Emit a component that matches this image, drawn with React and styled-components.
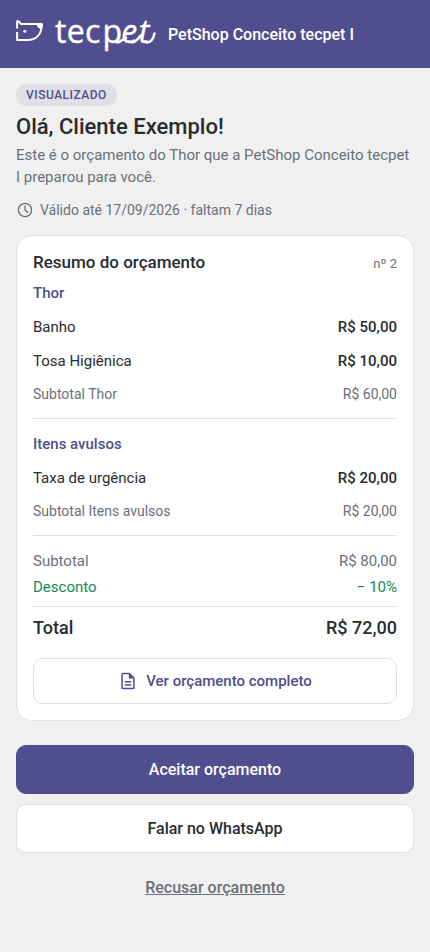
import React from "react";
import styled, { createGlobalStyle } from "styled-components";

const GlobalStyle = createGlobalStyle`
  * {
    box-sizing: border-box;
  }
  body {
    margin: 0;
    background: #f0f0f0;
    color: #292c2f;
    font-family: Roboto, "Liberation Sans", sans-serif;
    font-size: 15px;
  }
  button {
    font-family: inherit;
    cursor: pointer;
  }
`;

const groups = [
  {
    name: "Thor",
    items: [
      { label: "Banho", price: "R$ 50,00" },
      { label: "Tosa Higiênica", price: "R$ 10,00" },
    ],
    subtotal: "R$ 60,00",
  },
  {
    name: "Itens avulsos",
    items: [{ label: "Taxa de urgência", price: "R$ 20,00" }],
    subtotal: "R$ 20,00",
  },
];

const Logo = () => (
  <LogoBox>
    <svg width="28" height="24" viewBox="0 0 28 24" fill="none">
      <path
        d="M1.100 9.500V2.600Q1.300 1.400 2.300 2.300L5.200 5H25.800C25.800 15 20.500 21 11 21H1.100V13"
        stroke="#fff"
        strokeWidth="2"
        strokeLinejoin="round"
      />
      <path d="M20.500 5h6.200c0 2.200-.5 4-1.200 5.400-2.600-.4-4.600-2.600-5-5.400z" fill="#fff" />
      <circle cx="8.800" cy="12.300" r="1.500" fill="#fff" />
    </svg>
    <Wordmark>
      tec<Loose>p</Loose>
      <Slanted>et</Slanted>
      <Swash width="40" height="14" viewBox="0 0 40 14" fill="none">
        <path
          d="M1 12.500C5 12.500 7 8.500 10 7.500M16 12.500C20 12.500 22 9 24.500 5.500M31 12.500C35 12.500 37.500 8 38.500 3.500"
          stroke="#fff"
          strokeWidth="2.500"
          strokeLinecap="round"
        />
      </Swash>
    </Wordmark>
  </LogoBox>
);

const App = () => {
  return (
    <>
      <GlobalStyle />
      <Header>
        <Logo />
        <ShopName>PetShop Conceito tecpet I</ShopName>
      </Header>
      <Main>
        <Badge>VISUALIZADO</Badge>
        <Title>Olá, Cliente Exemplo!</Title>
        <Intro>
          Este é o orçamento do Thor que a PetShop Conceito tecpet I preparou
          para você.
        </Intro>
        <Validity>
          <svg
            width="18"
            height="18"
            viewBox="0 0 18 18"
            fill="none"
            stroke="#6b7078"
            strokeWidth="1.300"
            strokeLinecap="round"
            strokeLinejoin="round"
          >
            <circle cx="9" cy="9" r="6.600" />
            <path d="M9 4.800V9l2.600 2.300" />
          </svg>
          Válido até 17/09/2026 · faltam 7 dias
        </Validity>

        <Card>
          <CardHeader>
            <CardTitle>Resumo do orçamento</CardTitle>
            <QuoteNumber>nº 2</QuoteNumber>
          </CardHeader>
          {groups.map((group) => (
            <Group key={group.name}>
              <GroupName>{group.name}</GroupName>
              {group.items.map((item) => (
                <ItemRow key={item.label}>
                  <span>{item.label}</span>
                  <Price>{item.price}</Price>
                </ItemRow>
              ))}
              <SubtotalRow>
                <span>Subtotal {group.name}</span>
                <span>{group.subtotal}</span>
              </SubtotalRow>
            </Group>
          ))}
          <SummaryRow>
            <span>Subtotal</span>
            <span>R$ 80,00</span>
          </SummaryRow>
          <SummaryRow $discount>
            <span>Desconto</span>
            <span>− 10%</span>
          </SummaryRow>
          <TotalRow>
            <span>Total</span>
            <span>R$ 72,00</span>
          </TotalRow>
          <DetailsButton>
            <svg width="20" height="20" viewBox="0 0 24 24" fill="#504e8e">
              <path d="M8 16h8v1.800H8zm0-4h8v1.800H8zm6-10H6c-1.100 0-2 .9-2 2v16c0 1.100.890 2 1.990 2H18c1.100 0 2-.9 2-2V8l-6-6zm4.200 18.200H5.800V3.800H13v5.200h5.200z" />
            </svg>
            Ver orçamento completo
          </DetailsButton>
        </Card>

        <Actions>
          <ActionButton $primary>Aceitar orçamento</ActionButton>
          <ActionButton>Falar no WhatsApp</ActionButton>
        </Actions>
        <RefuseButton>Recusar orçamento</RefuseButton>
      </Main>
    </>
  );
};

const Header = styled.header`
  display: flex;
  align-items: center;
  gap: 12px;
  height: 68px;
  padding: 0 16px;
  background: #504e8e;
  color: #fff;
`;

const LogoBox = styled.div`
  display: flex;
  align-items: center;
  gap: 11px;
  width: 140px;
  height: 40px;
  padding-bottom: 7px;
`;

const Wordmark = styled.span`
  position: relative;
  font-family: "Open Sans", "Noto Sans", sans-serif;
  font-size: 32px;
  font-weight: 500;
  line-height: 40px;
  letter-spacing: 0.3px;
  white-space: nowrap;
  -webkit-text-stroke: 0.4px #fff;
`;

const Loose = styled.span`
  margin-left: 2px;
  letter-spacing: -1px;
`;

const Slanted = styled.span`
  font-style: italic;
  letter-spacing: 1.5px;
`;

// joins the last letters and ends the wordmark with an upward tail
const Swash = styled.svg`
  position: absolute;
  top: 19px;
  left: 61px;
`;

const ShopName = styled.span`
  padding-top: 2px;
  font-size: 16px;
  font-weight: 500;
  line-height: 20px;
`;

const Main = styled.main`
  display: flex;
  flex-direction: column;
  align-items: stretch;
  padding: 16px;
`;

const Badge = styled.span`
  align-self: flex-start;
  height: 22px;
  padding: 0 10px;
  border-radius: 11px;
  background: #e0dfe7;
  color: #504e8e;
  font-size: 12px;
  font-weight: 500;
  line-height: 22px;
  letter-spacing: 0.5px;
`;

const Title = styled.h1`
  margin: 6px 0 0;
  font-size: 22px;
  font-weight: 500;
  line-height: 29px;
`;

const Intro = styled.p`
  margin: 3px 0 0;
  color: #6b7078;
  font-size: 15px;
  line-height: 22px;
`;

const Validity = styled.div`
  display: flex;
  align-items: center;
  gap: 6px;
  height: 20px;
  margin-top: 12px;
  color: #6b7078;
  font-size: 14px;
`;

const Card = styled.section`
  margin-top: 15px;
  padding: 15px 16px 16px;
  border: 1px solid #e0e1e3;
  border-radius: 16px;
  background: #fff;
`;

const CardHeader = styled.div`
  display: flex;
  align-items: center;
  justify-content: space-between;
  height: 22px;
`;

const CardTitle = styled.h2`
  margin: 0;
  font-size: 17px;
  font-weight: 500;
`;

const QuoteNumber = styled.span`
  padding-top: 2px;
  color: #6b7078;
  font-size: 13px;
`;

const Group = styled.div`
  padding: 9px 0 13px;
  border-bottom: 1px solid #dfe0e2;

  & + & {
    padding-top: 14px;
  }
`;

const GroupName = styled.h3`
  margin: 0 0 5px;
  color: #504e8e;
  font-size: 15px;
  font-weight: 500;
  line-height: 23px;
`;

const Row = styled.div`
  display: flex;
  align-items: center;
  justify-content: space-between;
`;

const ItemRow = styled(Row)`
  height: 34px;
`;

const Price = styled.span`
  font-weight: 500;
`;

const SubtotalRow = styled(Row)`
  height: 32px;
  margin-bottom: -5px;
  color: #6b7078;
  font-size: 14px;
`;

const SummaryRow = styled(Row)`
  height: 26px;
  color: ${(props) => (props.$discount ? "#0f8a5a" : "#6b7078")};

  ${Group} + & {
    margin-top: 12px;
  }
`;

const TotalRow = styled(Row)`
  height: 43px;
  margin-top: 6px;
  padding-bottom: 2px;
  border-top: 1px solid #dfe0e2;
  font-size: 18px;
  font-weight: 500;
`;

const DetailsButton = styled.button`
  display: flex;
  align-items: center;
  justify-content: center;
  gap: 8px;
  width: 100%;
  height: 46px;
  margin-top: 9px;
  border: 1px solid #dfe0e2;
  border-radius: 10px;
  background: #fff;
  color: #504e8e;
  font-size: 15px;
  font-weight: 500;
`;

const Actions = styled.div`
  display: flex;
  flex-direction: column;
  gap: 10px;
  margin-top: 24px;
`;

const ActionButton = styled.button`
  height: 49px;
  border: 1px solid ${(props) => (props.$primary ? "#504e8e" : "#dfe0e2")};
  border-radius: 10px;
  background: ${(props) => (props.$primary ? "#504e8e" : "#fff")};
  color: ${(props) => (props.$primary ? "#fff" : "#292c2f")};
  font-size: 16px;
  font-weight: 500;
`;

const RefuseButton = styled.button`
  align-self: center;
  height: 40px;
  margin-top: 14px;
  padding: 0;
  border: 0;
  background: none;
  color: #6b7078;
  font-size: 16px;
  font-weight: 500;
  text-decoration: underline;
`;

export default App;
